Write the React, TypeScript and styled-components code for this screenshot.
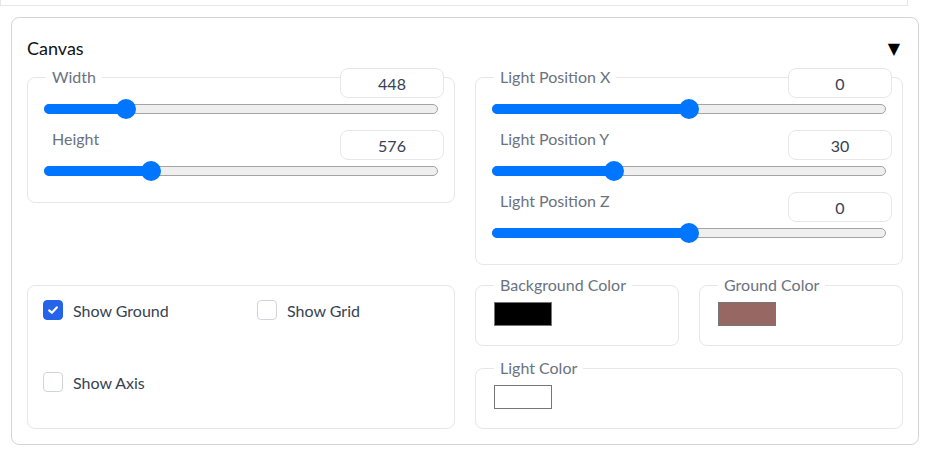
import React from 'react'
import styled, { createGlobalStyle } from 'styled-components'

const GlobalStyle = createGlobalStyle`
  body {
    margin: 0;
    background: #ffffff;
    font-family: Lato, "Noto Sans", sans-serif;
  }
`

const TopStrip = styled.div`
  width: 906px;
  height: 5px;
  border: 1px solid #e5e7eb;
  border-top: none;
`

const Card = styled.section`
  margin: 11px 0 0 11px;
  width: 876px;
  padding: 19px 15px 15px;
  border: 1px solid #d4d4d8;
  border-radius: 8px;
`

const CardHeader = styled.div`
  display: flex;
  align-items: center;
  justify-content: space-between;
  height: 22px;
  margin-bottom: 18px;
`

const Title = styled.span`
  font-size: 18px;
  color: #111111;
`

const Caret = styled.span`
  font-family: "DejaVu Sans", sans-serif;
  font-size: 16px;
  color: #000000;
  margin-right: 3px;
`

const Layout = styled.div`
  display: grid;
  grid-template-columns: 1fr 1fr;
  column-gap: 20px;
  row-gap: 20px;
  align-items: start;
`

const Group = styled.div`
  border: 1px solid #e5e7eb;
  border-radius: 8px;
  padding: 0 10px 21px 16px;
  display: flex;
  flex-direction: column;
  gap: 10px;
`

const Field = styled.div`
  display: flex;
  flex-direction: column;
  &:first-child {
    margin-top: -11px;
  }
`

const FieldHeader = styled.div`
  display: flex;
  align-items: flex-start;
  justify-content: space-between;
  height: 31px;
`

const Label = styled.span`
  font-size: 16px;
  line-height: 20px;
  color: #6b7280;
  background: #ffffff;
  padding: 0 6px;
  margin-left: 2px;
`

const NumberBox = styled.input`
  box-sizing: border-box;
  width: 104px;
  height: 30px;
  margin: 1px 0 0;
  border: 1px solid #e5e7eb;
  border-radius: 8px;
  background: #ffffff;
  text-align: center;
  font-family: Lato, "Noto Sans", sans-serif;
  font-size: 16px;
  color: #374151;
  outline: none;
  -moz-appearance: textfield;
  &::-webkit-inner-spin-button,
  &::-webkit-outer-spin-button {
    -webkit-appearance: none;
    margin: 0;
  }
`

const SliderRoot = styled.div`
  position: relative;
  height: 20px;
  margin: 1px 6px 0 0;
  display: flex;
  align-items: center;
`

const Track = styled.div`
  position: relative;
  box-sizing: border-box;
  width: 100%;
  height: 10px;
  border: 1px solid #a3a3a3;
  border-radius: 5px;
  background: #efefef;
`

const Fill = styled.div`
  position: absolute;
  left: -1px;
  top: -1px;
  bottom: -1px;
  border-radius: 5px;
  background: #0075ff;
`

const Thumb = styled.div`
  position: absolute;
  top: 0;
  width: 20px;
  height: 20px;
  border-radius: 50%;
  background: #0075ff;
`

const Slider = ({ min, max, value }: { min: number; max: number; value: number }) => {
  const pct = (value - min) / (max - min)
  return (
    <SliderRoot role="slider" aria-valuemin={min} aria-valuemax={max} aria-valuenow={value}>
      <Track>
        <Fill style={{ width: `calc(10px + (100% - 18px) * ${pct})` }} />
      </Track>
      <Thumb style={{ left: `calc((100% - 20px) * ${pct})` }} />
    </SliderRoot>
  )
}

type SliderFieldProps = {
  label: string
  min: number
  max: number
  value: number
}

const SliderField = ({ label, min, max, value }: SliderFieldProps) => (
  <Field>
    <FieldHeader>
      <Label>{label}</Label>
      <NumberBox type="number" defaultValue={value} min={min} max={max} />
    </FieldHeader>
    <Slider min={min} max={max} value={value} />
  </Field>
)

const CheckGroup = styled.div`
  align-self: stretch;
  border: 1px solid #e5e7eb;
  border-radius: 8px;
  padding: 14px 15px;
  display: grid;
  grid-template-columns: 214px 1fr;
  grid-auto-rows: 20px;
  row-gap: 52px;
`

const CheckItem = styled.label`
  display: flex;
  align-items: center;
  gap: 10px;
  font-size: 16px;
  color: #374151;
  cursor: pointer;
`

const CheckBox = styled.span<{ $checked?: boolean }>`
  box-sizing: border-box;
  width: 20px;
  height: 20px;
  border-radius: 4px;
  border: 1px solid ${({ $checked }) => ($checked ? '#2563eb' : '#d1d5db')};
  background: ${({ $checked }) => ($checked ? '#2563eb' : '#ffffff')};
  display: flex;
  align-items: center;
  justify-content: center;
`

const Check = ({ label, checked }: { label: string; checked?: boolean }) => (
  <CheckItem>
    <CheckBox $checked={checked}>
      {checked && (
        <svg width="12" height="12" viewBox="0 0 12 12">
          <path d="M2.2 6.4 L4.8 8.8 L9.8 3.4" fill="none" stroke="#ffffff" strokeWidth="2.2" strokeLinecap="round" strokeLinejoin="round" />
        </svg>
      )}
    </CheckBox>
    {label}
  </CheckItem>
)

const ColorColumn = styled.div`
  display: flex;
  flex-direction: column;
  gap: 22px;
`

const ColorRow = styled.div`
  display: grid;
  grid-template-columns: 1fr 1fr;
  gap: 20px;
`

const ColorBox = styled.div`
  border: 1px solid #e5e7eb;
  border-radius: 8px;
  padding: 0 16px 19px 18px;
  display: flex;
  flex-direction: column;
  align-items: flex-start;
`

const ColorLabel = styled(Label)`
  margin-top: -11px;
  margin-left: 0;
`

const Swatch = styled.div<{ $color: string }>`
  box-sizing: border-box;
  width: 58px;
  height: 24px;
  margin-top: 7px;
  border: 1px solid #767676;
  background: ${({ $color }) => $color};
`

const ColorField = ({ label, color }: { label: string; color: string }) => (
  <ColorBox>
    <ColorLabel>{label}</ColorLabel>
    <Swatch $color={color} />
  </ColorBox>
)

const App = () => (
  <>
    <GlobalStyle />
    <TopStrip />
    <Card>
      <CardHeader>
        <Title>Canvas</Title>
        <Caret>▼</Caret>
      </CardHeader>
      <Layout>
        <Group>
          <SliderField label="Width" min={64} max={2048} value={448} />
          <SliderField label="Height" min={64} max={2048} value={576} />
        </Group>
        <Group>
          <SliderField label="Light Position X" min={-100} max={100} value={0} />
          <SliderField label="Light Position Y" min={0} max={100} value={30} />
          <SliderField label="Light Position Z" min={-100} max={100} value={0} />
        </Group>
        <CheckGroup>
          <Check label="Show Ground" checked />
          <Check label="Show Grid" />
          <Check label="Show Axis" />
        </CheckGroup>
        <ColorColumn>
          <ColorRow>
            <ColorField label="Background Color" color="#000000" />
            <ColorField label="Ground Color" color="#976763" />
          </ColorRow>
          <ColorField label="Light Color" color="#ffffff" />
        </ColorColumn>
      </Layout>
    </Card>
  </>
)

export default App
